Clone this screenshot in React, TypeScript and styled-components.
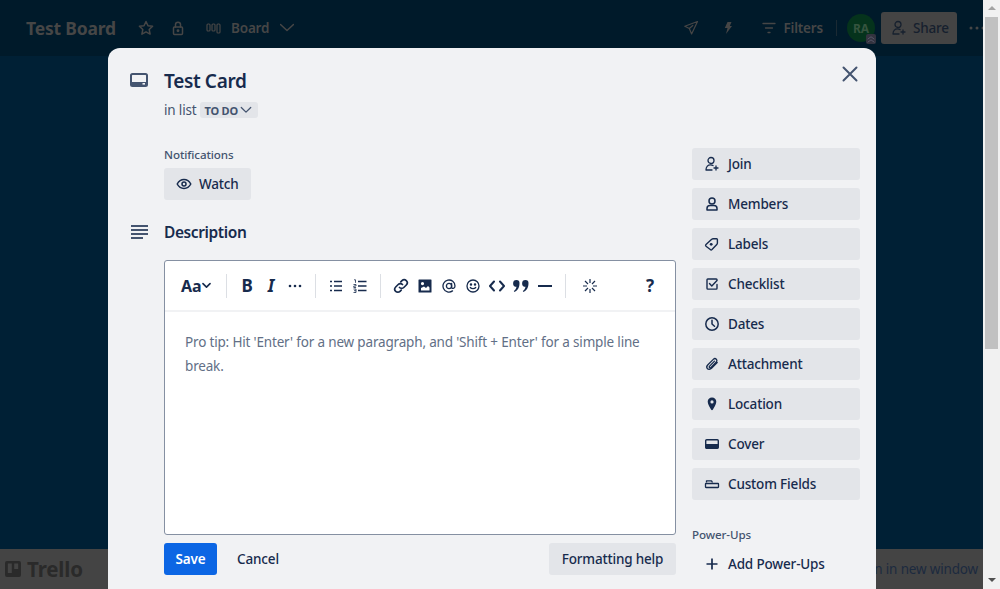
import React from 'react';
import styled, { createGlobalStyle } from 'styled-components';

const Global = createGlobalStyle`
  html, body { margin: 0; padding: 0; height: 100%; overflow: hidden; }
  body { font-family: "Noto Sans", "Open Sans", sans-serif; color: #172b4d; letter-spacing: -0.17px; }
  svg { display: block; flex: none; }
`;

const Page = styled.div`display: flex; width: 1000px; height: 589px; overflow: hidden; background: #f1f1f1;`;
const Viewport = styled.div`position: relative; width: 983px; height: 589px; display: flex; flex-direction: column; overflow: hidden; background: #002035;`;
const Scrollbar = styled.div`width: 17px; display: flex; flex-direction: column; align-items: center; background: #f1f1f1;`;
const ScrollArrow = styled.div<{ $down?: boolean }>`
  width: 0; height: 0; margin: 6px 0 7px;
  border-left: 4px solid transparent; border-right: 4px solid transparent;
  ${p => p.$down ? 'border-top: 4px solid #505050;' : 'border-bottom: 4px solid #a3a3a3;'}
`;
const ScrollThumb = styled.div`width: 13px; height: 332px; margin-bottom: auto; background: #c1c1c1;`;

const TopBar = styled.header`height: 56px; flex: none; display: flex; align-items: center; padding: 0 0 0 26px; background: #001a2a; color: #464646;`;
const BoardName = styled.div`width: 89px; font-size: 17.5px; font-weight: 700; line-height: 24px; margin-right: 23px; letter-spacing: -0.2px; white-space: nowrap;`;
const BarIcon = styled.span<{ $ml?: number }>`display: flex; margin-left: ${p => p.$ml ?? 0}px;`;
const BarLabel = styled.span<{ $ml?: number }>`font-size: 13.5px; font-weight: 600; margin-left: ${p => p.$ml ?? 0}px;`;
const BarSpacer = styled.div`flex: 1;`;
const BarDivider = styled.div`width: 1px; height: 16px; margin: 0 10px 0 13px; background: #1b2a33;`;
const Avatar = styled.div`position: relative; width: 28px; height: 28px; border-radius: 50%; background: #05331c; color: #35543f; font-size: 12px; font-weight: 700; display: flex; align-items: center; justify-content: center;`;
const AvatarBadge = styled.span`position: absolute; right: -1px; bottom: -2px; display: flex; width: 10px; height: 10px; border-radius: 2px; background: #33333f; color: #5a5a6e; align-items: center; justify-content: center;`;
const ShareButton = styled.div`display: flex; align-items: center; gap: 6px; width: 76px; height: 32px; margin-left: 6px; padding-left: 10px; box-sizing: border-box; border-radius: 3px; background: #444444; color: #16202e; font-size: 13.5px; font-weight: 500;`;
const Dots = styled.span`display: flex; margin-left: 12px; margin-right: -2px;`;

const Board = styled.main`flex: 1;`;
const Footer = styled.footer`height: 40px; flex: none; display: flex; align-items: center; justify-content: space-between; padding: 0 5px; box-sizing: border-box; background: #444444; color: #1c2a3f;`;
const Brand = styled.div`display: flex; align-items: center; gap: 6px; color: #2a2a2a; font-size: 20.5px; font-weight: 700;`;
const OpenLink = styled.div`font-size: 13.5px; white-space: nowrap;`;

const Modal = styled.section`position: absolute; left: 108px; top: 48px; width: 768px; height: 560px; padding-top: 17px; box-sizing: border-box; border-radius: 12px 12px 0 0; background: #f1f2f4;`;
const CloseButton = styled.div`position: absolute; top: 16px; right: 16px; display: flex; color: #44546f;`;
const Row = styled.div`display: flex;`;
const IconSlot = styled.div<{ $top?: number }>`width: 56px; flex: none; box-sizing: border-box; padding: ${p => p.$top ?? 0}px 0 0 22px; color: #44546f;`;
const Title = styled.h1`margin: 0; font-size: 19px; line-height: 32px; font-weight: 600; letter-spacing: -0.35px; color: #172b4d;`;
const InList = styled.div`display: flex; align-items: center; margin-top: 3px; height: 20px; font-size: 13.5px; color: #44546f;`;
const ListTag = styled.span`display: flex; align-items: center; gap: 2px; height: 16px; margin-left: 4px; padding: 0 6px 0 4px; border-radius: 3px; background: #e3e5e9; font-size: 11px; font-weight: 700; letter-spacing: -0.2px; color: #44546f;`;

const Body = styled.div`display: flex; margin-top: 28px;`;
const Main = styled.div`width: 568px; flex: none;`;
const Label = styled.div`font-size: 11.6px; line-height: 16px; font-weight: 500; letter-spacing: -0.1px; color: #44546f;`;
const Notifications = styled.div`margin: -1px 0 0 56px;`;
const Button = styled.div`display: inline-flex; align-items: center; height: 32px; box-sizing: border-box; border-radius: 3px; background: #e3e5e9; font-size: 13.5px; font-weight: 500; color: #172b4d;`;
const WatchButton = styled(Button)`width: 87px; margin-top: 5px; padding-left: 12px; gap: 7px;`;
const DescriptionRow = styled(Row)`margin-top: 20px;`;
const SectionTitle = styled.h2`margin: 0; font-size: 15.5px; line-height: 24px; font-weight: 600; letter-spacing: -0.4px; color: #172b4d;`;

const Editor = styled.div`width: 512px; height: 275px; margin: 16px 0 0 56px; box-sizing: border-box; border: 1px solid #8590a2; border-radius: 3px; background: #fff;`;
const Toolbar = styled.div`display: flex; align-items: center; height: 51px; box-sizing: border-box; padding: 0 13px 0 16px; border-bottom: 2px solid #f1f2f4; color: #172b4d;`;
const FontMenu = styled.div`display: flex; align-items: center; width: 37px; font-size: 16px; font-weight: 700; letter-spacing: 0;`;
const Sep = styled.div`width: 1px; height: 24px; margin: 0 8px; flex: none; background: #dcdfe4;`;
const Tool = styled.div<{ $italic?: boolean; $ml?: number }>`
  width: 24px; height: 24px; flex: none; display: flex; align-items: center; justify-content: center;
  margin-left: ${p => p.$ml ?? 0}px;
  font-size: 17px; font-weight: 700; font-style: ${p => p.$italic ? 'italic' : 'normal'};
`;
const ToolSpacer = styled.div`flex: 1;`;
const Placeholder = styled.div`padding: 18px 20px 0; font-size: 13.5px; line-height: 24px; color: #626f86;`;

const Actions = styled.div`display: flex; align-items: center; width: 512px; margin: 8px 0 0 56px;`;
const SaveButton = styled(Button)`width: 53px; justify-content: center; background: #0c66e4; color: #fff; font-weight: 600;`;
const CancelButton = styled(Button)`width: 82px; justify-content: center; background: transparent;`;
const HelpButton = styled(Button)`width: 127px; justify-content: center; margin-left: auto;`;

const Sidebar = styled.aside`width: 168px; margin-left: 16px; display: flex; flex-direction: column; gap: 8px;`;
const SideButton = styled(Button)<{ $flat?: boolean }>`
  display: flex; height: 32px; padding-left: 12px; gap: 8px;
  background: ${p => p.$flat ? 'transparent' : '#e3e5e9'};
`;
const SideIcon = styled.span`display: flex; width: 16px; justify-content: center;`;
const PowerLabel = styled(Label)`margin: 19px 0 -3px;`;

const Svg = ({ w = 16, h = 16, vb, children, sw = 1.5 }: { w?: number; h?: number; vb?: string; children: React.ReactNode; sw?: number }) => (
  <svg width={w} height={h} viewBox={vb ?? `0 0 ${w} ${h}`} fill="none" stroke="currentColor" strokeWidth={sw} strokeLinecap="round" strokeLinejoin="round">{children}</svg>
);

const CardIcon = () => (
  <svg width="18" height="14" viewBox="0 0 18 14">
    <rect x="1" y="1" width="16" height="12" rx="1.5" fill="none" stroke="currentColor" strokeWidth="2" />
    <rect x="1" y="9" width="16" height="4" fill="currentColor" />
    <rect x="12.5" y="10" width="2.5" height="1.6" fill="#f1f2f4" />
  </svg>
);
const CoverIcon = () => (
  <svg width="14" height="10" viewBox="0 0 14 10">
    <rect x=".7" y=".7" width="12.6" height="8.6" rx="1" fill="none" stroke="currentColor" strokeWidth="1.4" />
    <rect x=".7" y="5" width="12.6" height="4.3" fill="currentColor" />
  </svg>
);
const PersonPlus = () => (
  <Svg w={16} h={16} sw={1.3}>
    <circle cx="7" cy="4.5" r="3" />
    <path d="M2 14c0-3.5 2-5.2 4.5-5.2 1 0 1.8.2 2.5.7M2 14h6" />
    <path d="M12 10v4M10 12h4" />
  </Svg>
);
const Chevron = ({ s = 14, sw = 1.5 }: { s?: number; sw?: number }) => (
  <Svg w={s} h={s} vb="0 0 14 14" sw={sw}><path d="M1.5 4l5.5 5.5L12.5 4" /></Svg>
);

const sideItems: [React.ReactNode, string][] = [
  [<PersonPlus />, 'Join'],
  [<Svg sw={1.5}><circle cx="8" cy="5" r="3" /><path d="M3 14v-1.5C3 10.5 4.5 9.5 6 9.5h4c1.5 0 3 1 3 3V14z" /></Svg>, 'Members'],
  [<Svg sw={1.4}><path d="M2 8.500L7.700 3.300c.4-.4.800-.6 1.400-.6h3.500c.5 0 .8.300.8.800v3.500c0 .6-.2 1-.6 1.400L8 13.500c-.5.500-1.200.5-1.700 0L2 10.200c-.5-.5-.5-1.200 0-1.700z" /><circle cx="7.2" cy="8.3" r="1.4" fill="currentColor" stroke="none" /></Svg>, 'Labels'],
  [<Svg sw={1.4}><path d="M13 8.500v3.800c0 .5-.3.800-.8.800H3.800c-.5 0-.8-.3-.8-.8V3.800c0-.5.300-.8.800-.8h8.400c.5 0 .8.300.8.800" /><path d="M5.5 7.5L7.800 10l5.200-5.500" /></Svg>, 'Checklist'],
  [<Svg sw={1.5}><circle cx="8" cy="8" r="6.2" /><path d="M8 4.300V8l2.500 2.200" /></Svg>, 'Dates'],
  [<Svg sw={1.3}><path d="M13.200 6.500L7.500 12.400c-1.300 1.300-3.100 1.300-4 .4s-.9-2.700.4-4l5.400-5.400c1-1 2.200-1 3-.2s.8 2-.2 3L7 11.500c-.5.500-1.100.5-1.500.1s-.4-1 .1-1.500l4.900-5" /></Svg>, 'Attachment'],
  [<svg width="16" height="16" viewBox="0 0 16 16"><path fillRule="evenodd" fill="currentColor" d="M8 1.500c2.500 0 4.300 1.900 4.300 4.300 0 2.700-2.400 6-3.500 7.900-.4.600-1.200.600-1.600 0C6.100 11.800 3.700 8.500 3.700 5.800 3.700 3.400 5.500 1.500 8 1.500zm0 2.800a1.600 1.600 0 100 3.200 1.600 1.600 0 000-3.200z" /></svg>, 'Location'],
  [<CoverIcon />, 'Cover'],
  [<Svg w={16} h={16} sw={1.3}><path d="M2.500 6.500V4.800h5l1 1.700" strokeLinecap="butt" /><rect x="1.5" y="7.5" width="13" height="4" rx=".5" /></Svg>, 'Custom Fields'],
];

export default function App() {
  return (
    <>
      <Global />
      <Page>
        <Viewport>
          <TopBar>
            <BoardName>Test Board</BoardName>
            <BarIcon><Svg><path d="M8 1.500l2 4.200 4.600.6-3.400 3.200.9 4.600L8 11.800l-4.100 2.300.9-4.600L1.400 6.300 6 5.700z" /></Svg></BarIcon>
            <BarIcon $ml={16}><Svg><rect x="3.5" y="7" width="9" height="7.5" rx="1" /><path d="M5.500 7V4.500c0-3 5-3 5 0V7" /><circle cx="8" cy="10.7" r=".7" fill="currentColor" /></Svg></BarIcon>
            <BarIcon $ml={20}><Svg w={16} h={16} sw={1.2}><rect x="1" y="4" width="3" height="7" rx="1" /><rect x="6" y="4" width="3" height="7" rx="1" /><rect x="11" y="4" width="3" height="9" rx="1" /></Svg></BarIcon>
            <BarLabel $ml={9}>Board</BarLabel>
            <BarIcon $ml={11}><Svg w={14} h={14}><path d="M0.500 3.500L7 9.500l6.500-6" /></Svg></BarIcon>
            <BarSpacer />
            <BarIcon><Svg sw={1.2}><path d="M14.500 1.500L1.800 6.200l4.500 2.300 2.300 5.500zM6.300 8.500l3.500-3" /></Svg></BarIcon>
            <BarIcon $ml={21}><svg width="16" height="16" viewBox="0 0 16 16"><path fill="currentColor" d="M7.500 2h4L9.800 6H12l-6 8 1.500-6H4.800z" /></svg></BarIcon>
            <BarIcon $ml={25}><Svg sw={1.3}><path d="M2 3.500h12M4.500 8h7M7 12.500h2" /></Svg></BarIcon>
            <BarLabel $ml={6}>Filters</BarLabel>
            <BarDivider />
            <Avatar>RA
              <AvatarBadge><Svg w={8} h={8} vb="0 0 9 9" sw={1}><path d="M1 4.500L4.500 2 8 4.500M1 8L4.500 5.500 8 8" /></Svg></AvatarBadge>
            </Avatar>
            <ShareButton><Svg sw={1.3}><circle cx="7" cy="4.5" r="3" /><path d="M2 14c0-3.500 2-5.200 4.500-5.200 1 0 1.800.2 2.500.7M2 14h6M12 10v4M10 12h4" /></Svg>Share</ShareButton>
            <Dots><svg width="16" height="4" viewBox="0 0 16 4"><g fill="#464646"><circle cx="2" cy="2" r="1.5" /><circle cx="8" cy="2" r="1.5" /><circle cx="14" cy="2" r="1.5" /></g></svg></Dots>
          </TopBar>
          <Board />
          <Footer>
            <Brand>
              <svg width="16" height="16" viewBox="0 0 16 16"><path fillRule="evenodd" fill="currentColor" d="M2 0h12a2 2 0 012 2v12a2 2 0 01-2 2H2a2 2 0 01-2-2V2a2 2 0 012-2zm.800 2.400v9.700h4V2.400zm6.400 0v5.700h4V2.400z" /></svg>
              Trello
            </Brand>
            <OpenLink>Open in new window</OpenLink>
          </Footer>
          <Modal>
            <CloseButton><Svg w={20} h={20} sw={2}><path d="M3.500 3.500l13 13M16.500 3.500l-13 13" /></Svg></CloseButton>
            <Row>
              <IconSlot $top={8}><CardIcon /></IconSlot>
              <div>
                <Title>Test Card</Title>
                <InList>in list<ListTag>TO DO<Chevron s={12} /></ListTag></InList>
              </div>
            </Row>
            <Body>
              <Main>
                <Notifications>
                  <Label>Notifications</Label>
                  <WatchButton>
                    <Svg sw={1.5}><path d="M1.200 8C2.800 5 5.200 3.500 8 3.500S13.200 5 14.800 8c-1.600 3-4 4.500-6.800 4.500S2.800 11 1.200 8z" /><circle cx="8" cy="8" r="2" /></Svg>
                    Watch
                  </WatchButton>
                </Notifications>
                <DescriptionRow>
                  <IconSlot $top={4}>
                    <Svg w={18} h={16} sw={2}><path d="M1 2h18M1 6h18M1 10h18M1 14h12" strokeLinecap="butt" /></Svg>
                  </IconSlot>
                  <SectionTitle>Description</SectionTitle>
                </DescriptionRow>
                <Editor>
                  <Toolbar>
                    <FontMenu>Aa<Chevron s={9} sw={2.5} /></FontMenu>
                    <Sep />
                    <Tool>B</Tool>
                    <Tool $italic>I</Tool>
                    <Tool><svg width="14" height="4" viewBox="0 0 14 4"><g fill="currentColor"><circle cx="2" cy="2" r="1.3" /><circle cx="7" cy="2" r="1.3" /><circle cx="12" cy="2" r="1.3" /></g></svg></Tool>
                    <Sep />
                    <Tool><Svg w={14} h={12} vb="0 0 14 12" sw={1.7}><path d="M5 1.500h8M5 6h8M5 10.500h8M1 1.500h2M1 6h2M1 10.500h2" strokeLinecap="butt" /></Svg></Tool>
                    <Tool><svg width="14" height="14" viewBox="0 0 14 14"><path d="M5 2.500h8.500M5 7h8.500M5 11.500h8.500" stroke="currentColor" strokeWidth="1.7" /><path d="M1 .8h1.500v3M.5 5.500h2.500V7H.8v1.500h2.300M.5 10h2.500v3.500H.5M1 11.700h2" fill="none" stroke="currentColor" strokeWidth=".8" /></svg></Tool>
                    <Sep />
                    <Tool><Svg w={16} h={16} sw={1.7}><path d="M6.500 9.500a3 3 0 004.300 0l2.500-2.500a3 3 0 00-4.300-4.300L7.800 3.900" /><path d="M9.500 6.500a3 3 0 00-4.300 0L2.700 9a3 3 0 004.300 4.300l1.200-1.200" /></Svg></Tool>
                    <Tool><svg width="14" height="14" viewBox="0 0 14 14"><path fillRule="evenodd" fill="currentColor" d="M1 .5h12a.5.5 0 01.5.5v12a.5.5 0 01-.5.5H1a.5.5 0 01-.5-.5V1A.5.5 0 011 .5zM3 9v2.500h8.500V8.500L10 7 8 9 6 7.500zM4.500 3a1.600 1.600 0 100 3.200 1.600 1.600 0 000-3.200z" /></svg></Tool>
                    <Tool><Svg w={14} h={14} sw={1.3}><circle cx="7" cy="7" r="2.6" /><path d="M9.600 4.500v3.700c0 2 3.400 1.500 3.400-1.200a6 6 0 10-2.500 4.900" /></Svg></Tool>
                    <Tool><Svg w={14} h={14} sw={1.3}><circle cx="7" cy="7" r="6" /><path d="M4.300 8.500c1.200 1.600 4.200 1.600 5.400 0" /><circle cx="5" cy="5.500" r=".6" fill="currentColor" /><circle cx="9" cy="5.500" r=".6" fill="currentColor" /></Svg></Tool>
                    <Tool><Svg w={16} h={12} vb="0 0 16 12" sw={2}><path d="M5 1.500L1 6l4 4.500M11 1.500L15 6l-4 4.500" /></Svg></Tool>
                    <Tool><svg width="16" height="14" viewBox="0 0 16 14"><path fill="currentColor" d="M3.500 1a3 3 0 013 3c0 4-1.500 7.500-5 9l-.7-1c1.500-1 2.400-2.300 2.700-4.200a3.300 3.300 0 010-6.800zm9 0a3 3 0 013 3c0 4-1.500 7.500-5 9l-.7-1c1.500-1 2.400-2.300 2.700-4.200a3.300 3.300 0 010-6.800z" /></svg></Tool>
                    <Tool><Svg w={14} h={4} vb="0 0 14 4" sw={2}><path d="M0 2h14" strokeLinecap="butt" /></Svg></Tool>
                    <Sep />
                    <Tool $ml={4}><Svg w={14} h={14} sw={1.2}><path d="M7 0v4M7 10v4M0 7h4M10 7h4M2 2l3 3M9 9l3 3M12 2L9 5M5 9l-3 3" strokeLinecap="butt" /></Svg></Tool>
                    <ToolSpacer />
                    <Tool>?</Tool>
                  </Toolbar>
                  <Placeholder>Pro tip: Hit 'Enter' for a new paragraph, and 'Shift + Enter' for a simple line break.</Placeholder>
                </Editor>
                <Actions>
                  <SaveButton>Save</SaveButton>
                  <CancelButton>Cancel</CancelButton>
                  <HelpButton>Formatting help</HelpButton>
                </Actions>
              </Main>
              <Sidebar>
                {sideItems.map(([icon, label]) => (
                  <SideButton key={label}><SideIcon>{icon}</SideIcon>{label}</SideButton>
                ))}
                <PowerLabel>Power-Ups</PowerLabel>
                <SideButton $flat>
                  <SideIcon><Svg sw={1.7}><path d="M8 2.500v11M2.500 8h11" strokeLinecap="butt" /></Svg></SideIcon>
                  Add Power-Ups
                </SideButton>
              </Sidebar>
            </Body>
          </Modal>
        </Viewport>
        <Scrollbar>
          <ScrollArrow />
          <ScrollThumb />
          <ScrollArrow $down />
        </Scrollbar>
      </Page>
    </>
  );
}
